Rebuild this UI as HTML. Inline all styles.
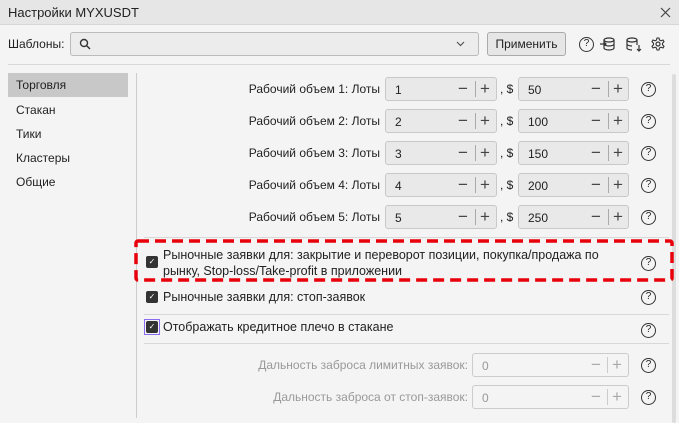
<!DOCTYPE html><html><head><meta charset="utf-8"><style>
*{box-sizing:border-box;margin:0;padding:0}
body{width:679px;height:423px;overflow:hidden;background:#f4f4f4;font-family:"Liberation Sans",sans-serif;font-size:12px;color:#222;position:relative}
.a{position:absolute}
.title{left:0;top:0;width:679px;height:25px;background:#e6e6e6;border-bottom:1px solid #d6d6d6}
.inp{position:absolute;height:24px;border:1px solid #c8c8c8;border-radius:3px;background:#e9e9e9}
.inp span{position:absolute;left:9px;top:5px;font-size:12px}
.pm{position:absolute;top:2px;font-size:17px;line-height:18px;color:#444}
.q{position:absolute;width:15px;height:15px;border:1.3px solid #333;border-radius:50%;font-size:10px;text-align:center;line-height:12px}
.lbl{position:absolute;text-align:right;font-size:12px}
.cb{position:absolute;width:12px;height:12px;background:#333;border-radius:2px;color:#fff;font-size:8px;text-align:center;line-height:12px}
.hr{position:absolute;height:1px;background:#d8d8d8}
.g{color:#999}
.t{font-size:12.5px}
</style></head><body>
<div class="a title"></div>
<div class="a" style="left:8px;top:5px;font-size:13px">Настройки MYXUSDT</div>
<svg class="a" style="left:660px;top:7px" width="11" height="11"><path d="M1 1L10 10M10 1L1 10" stroke="#444" stroke-width="1.2"/></svg>
<div class="a" style="left:8px;top:37px;font-size:12px">Шаблоны:</div>
<div class="a" style="left:70px;top:32px;width:409px;height:24px;border:1px solid #bbb;border-radius:3px;background:#ececec"></div>
<svg class="a" style="left:79px;top:38px" width="12" height="12"><circle cx="5" cy="5" r="3.5" fill="none" stroke="#333" stroke-width="1.4"/><path d="M7.5 7.5L11 11" stroke="#333" stroke-width="1.4"/></svg>
<svg class="a" style="left:456px;top:41px" width="9" height="6"><path d="M1 1L4.5 4.5L8 1" fill="none" stroke="#555" stroke-width="1.2"/></svg>
<div class="a" style="left:487px;top:32px;width:79px;height:24px;border:1px solid #aaa;border-radius:3px;background:#e6e6e6;text-align:center;line-height:22px;font-size:12px">Применить</div>
<div class="q" style="left:579px;top:37px">?</div>
<svg class="a" style="left:600px;top:36px" width="16" height="16"><ellipse cx="9" cy="4" rx="5" ry="2" fill="none" stroke="#333" stroke-width="1.2"/><path d="M4 4v8c0 1 2 2 5 2s5-1 5-2V4M4 8c0 1 2 2 5 2s5-1 5-2M0 8h6M4 6l2 2-2 2" fill="none" stroke="#333" stroke-width="1.2"/></svg>
<svg class="a" style="left:626px;top:36px" width="16" height="16"><ellipse cx="6" cy="4" rx="5" ry="2" fill="none" stroke="#333" stroke-width="1.2"/><path d="M1 4v8c0 1 2 2 5 2M11 4v5M1 8c0 1 2 2 5 2M13 9v6M11 13l2 2 2-2" fill="none" stroke="#333" stroke-width="1.2"/></svg>
<svg class="a" style="left:651px;top:37px" width="14" height="14"><circle cx="7" cy="7" r="2" fill="none" stroke="#333" stroke-width="1.2"/><path d="M6 1h2l.5 2 1.5.8 2-.8 1 1.7-1.5 1.5v1.6l1.5 1.5-1 1.7-2-.8-1.5.8L8 13H6l-.5-2L4 10.2l-2 .8-1-1.7 1.5-1.5V6.2L1 4.7l1-1.7 2 .8L5.5 3z" fill="none" stroke="#333" stroke-width="1.1"/></svg>
<div class="hr" style="left:8px;top:64px;width:662px"></div>
<div class="a" style="left:8px;top:73px;width:120px;height:24px;background:#c8c8c8"></div>
<div class="a" style="left:16px;top:79px;line-height:12px">Торговля</div>
<div class="a" style="left:16px;top:103px">Стакан</div>
<div class="a" style="left:16px;top:127px">Тики</div>
<div class="a" style="left:16px;top:151px">Кластеры</div>
<div class="a" style="left:16px;top:175px">Общие</div>
<div class="a" style="left:136px;top:73px;width:1px;height:345px;background:#ccc"></div>
<div class="a" style="left:672px;top:74px;width:4px;height:349px;background:#ddd;border-radius:2px"></div>
<div id="rows"></div>
<script>
var h='';var v=[['1','50'],['2','100'],['3','150'],['4','200'],['5','250']];
for(var i=0;i<5;i++){var y=77+i*32;
h+='<div class="lbl" style="left:200px;width:180px;top:'+(y+5)+'px">Рабочий объем '+(i+1)+': Лоты</div>';
h+='<div class="inp" style="left:385px;top:'+y+'px;width:112px"><span>'+v[i][0]+'</span><div class="pm" style="left:72px">−</div><div style="position:absolute;left:89px;top:3px;width:1px;height:16px;background:#aaa"></div><div class="pm" style="left:94px">+</div></div>';
h+='<div class="a" style="left:500px;top:'+(y+5)+'px">, $</div>';
h+='<div class="inp" style="left:518px;top:'+y+'px;width:111px"><span>'+v[i][1]+'</span><div class="pm" style="left:72px">−</div><div style="position:absolute;left:89px;top:3px;width:1px;height:16px;background:#aaa"></div><div class="pm" style="left:94px">+</div></div>';
h+='<div class="q" style="left:641px;top:'+(y+5)+'px">?</div>';}
var d=[['Дальность заброса лимитных заявок:',353],['Дальность заброса от стоп-заявок:',385]];
for(var j=0;j<2;j++){var y=d[j][1];
h+='<div class="lbl g" style="left:200px;width:268px;top:'+(y+5)+'px">'+d[j][0]+'</div>';
h+='<div class="inp" style="left:472px;top:'+y+'px;width:157px;background:#f4f4f4;border-color:#ccc"><span class="g">0</span><div class="pm g" style="left:118px;color:#aaa">−</div><div style="position:absolute;left:134px;top:3px;width:1px;height:16px;background:#ccc"></div><div class="pm" style="left:139px;color:#aaa">+</div></div>';
h+='<div class="q" style="left:641px;top:'+(y+5)+'px">?</div>';}
document.getElementById('rows').innerHTML=h;
</script>
<div class="hr" style="left:144px;top:237px;width:525px"></div>
<svg class="a" style="left:134px;top:239px" width="540" height="43"><rect x="2" y="2" width="536" height="39" rx="2" fill="none" stroke="#e8000b" stroke-width="3.5" stroke-dasharray="11 6"/></svg>
<div class="cb" style="left:146px;top:256px">✓</div>
<div class="a t" style="left:163px;top:247px;line-height:16px">Рыночные заявки для: закрытие и переворот позиции, покупка/продажа по<br>рынку, Stop-loss/Take-profit в приложении</div>
<div class="q" style="left:641px;top:256px">?</div>
<div class="cb" style="left:146px;top:291px">✓</div>
<div class="a t" style="left:163px;top:290px">Рыночные заявки для: стоп-заявок</div>
<div class="q" style="left:641px;top:290px">?</div>
<div class="hr" style="left:144px;top:314px;width:525px"></div>
<div class="a" style="left:144px;top:319px;width:16px;height:16px;border:1px solid #8a6cf0"></div>
<div class="cb" style="left:146px;top:321px">✓</div>
<div class="a t" style="left:163px;top:320px">Отображать кредитное плечо в стакане</div>
<div class="q" style="left:641px;top:323px">?</div>
<div class="hr" style="left:144px;top:343px;width:525px"></div>
</body></html>
